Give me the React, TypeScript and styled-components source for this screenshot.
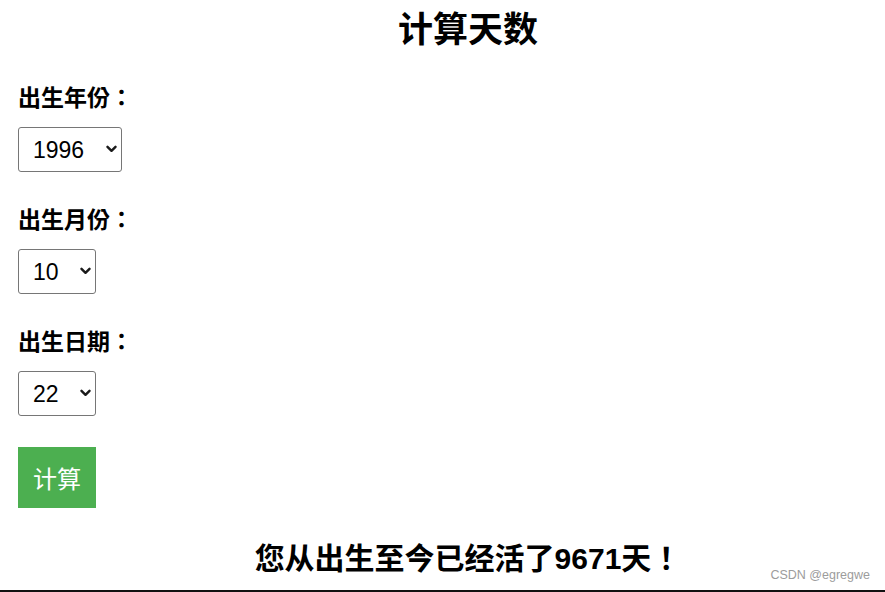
import styled, { createGlobalStyle } from "styled-components";

const GlobalStyle = createGlobalStyle`
  html, body {
    margin: 0;
    padding: 0;
    background: #fff;
    overflow: hidden;
  }
  body {
    font-family: "Liberation Sans", "Noto Sans CJK TC", sans-serif;
    color: #000;
  }
`;

const Page = styled.div`
  position: relative;
  box-sizing: border-box;
  height: 592px;
  padding-left: 18px;
  border-bottom: 2px solid #111;
`;

const Title = styled.h1`
  width: 900px;
  margin: 0;
  height: 58px;
  line-height: 60px;
  font-size: 35px;
  font-weight: bold;
  text-align: center;
`;

const Field = styled.div<{ $top: number }>`
  display: flex;
  flex-direction: column;
  align-items: flex-start;
  gap: 12px;
  margin-top: ${(p) => p.$top}px;
`;

const Label = styled.label`
  display: block;
  height: 34px;
  line-height: 34px;
  font-size: 23px;
  font-weight: bold;
`;

const SelectWrap = styled.div`
  position: relative;
  display: inline-block;
`;

const Select = styled.select<{ $width: number }>`
  display: block;
  box-sizing: border-box;
  width: ${(p) => p.$width}px;
  height: 45px;
  padding: 0 0 0 14px;
  font-family: "Liberation Sans", sans-serif;
  font-size: 23px;
  color: #000;
  background: #fff;
  border: 1px solid #767676;
  border-radius: 3px;
  appearance: none;
  -webkit-appearance: none;
  outline: none;
`;

const Chevron = styled.svg`
  position: absolute;
  right: 5px;
  top: 18px;
  width: 11px;
  height: 8px;
  pointer-events: none;
`;

const Button = styled.button`
  display: block;
  margin-top: 31px;
  width: 78px;
  height: 61px;
  padding: 0;
  border: none;
  background: #4caf50;
  color: #fff;
  font-family: "Liberation Sans", "Noto Sans CJK TC", sans-serif;
  font-size: 24px;
  cursor: pointer;
`;

const Result = styled.h2`
  width: 900px;
  margin: 30px 0 0;
  height: 40px;
  line-height: 42px;
  font-size: 30px;
  font-weight: bold;
  text-align: center;
`;

const Watermark = styled.span`
  position: absolute;
  right: 15px;
  bottom: 8px;
  font-family: "Liberation Sans", sans-serif;
  font-size: 12.5px;
  color: #9c9c9c;
`;

const range = (from: number, to: number) =>
  Array.from({ length: to - from + 1 }, (_, i) => from + i);

const fields = [
  { label: "出生年份：", value: 1996, options: range(1900, 2023), width: 104, top: 23 },
  { label: "出生月份：", value: 10, options: range(1, 12), width: 78, top: 31 },
  { label: "出生日期：", value: 22, options: range(1, 31), width: 78, top: 31 },
];

export default function App() {
  return (
    <>
      <GlobalStyle />
      <Page>
        <Title>计算天数</Title>
        {fields.map((f) => (
          <Field key={f.label} $top={f.top}>
            <Label>{f.label}</Label>
            <SelectWrap>
              <Select $width={f.width} defaultValue={f.value}>
                {f.options.map((o) => (
                  <option key={o} value={o}>
                    {o}
                  </option>
                ))}
              </Select>
              <Chevron viewBox="0 0 11 8">
                <path
                  d="M1.5 1.8 L5.5 5.8 L9.5 1.8"
                  fill="none"
                  stroke="#1a1a1a"
                  strokeWidth="2.4"
                  strokeLinecap="round"
                  strokeLinejoin="round"
                />
              </Chevron>
            </SelectWrap>
          </Field>
        ))}
        <Button>计算</Button>
        <Result>您从出生至今已经活了9671天！</Result>
        <Watermark>CSDN @egregwe</Watermark>
      </Page>
    </>
  );
}
